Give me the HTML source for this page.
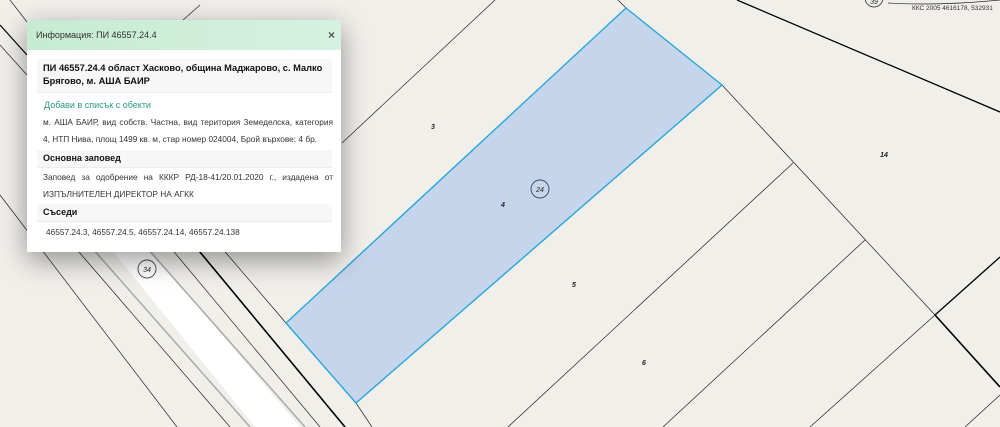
<!DOCTYPE html>
<html><head><meta charset="utf-8"><style>
body{margin:0;width:1000px;height:427px;overflow:hidden;background:#f1efea;font-family:"Liberation Sans","DejaVu Sans",sans-serif;position:relative}
svg{position:absolute;left:0;top:0}
.p{position:absolute;left:27px;top:20px;width:314px;height:232px;background:#fff;box-shadow:0 8px 26px rgba(0,0,0,.4)}
.h{height:30px;background:linear-gradient(90deg,#c6ebd1,#d6f1e2);font-size:9px;color:#333;line-height:31px;padding-left:9px;position:relative}
.x{position:absolute;right:6px;top:0;font-size:12px;font-weight:bold;color:#555}
.s{margin:0 9px 0 10px;background:#f7f7f7;border-bottom:1px solid #ececec;font-weight:bold;color:#111;padding:0 6px}
.t{font-size:8.3px;color:#333;padding:0 8px 0 16px;line-height:17px;text-align:justify}
</style></head><body>
<svg width="1000" height="427" viewBox="0 0 1000 427">
<polygon points="100,235 137,235 300,427 255,427" fill="#fff"/>
<g stroke="#222" fill="none" stroke-width="0.7">
<line x1="0" y1="195" x2="177" y2="427"/>
<line x1="60" y1="230" x2="230" y2="427"/>
<line x1="85" y1="240" x2="250" y2="427" stroke="#aaa" stroke-width="1.5"/>
<line x1="140" y1="240" x2="305" y2="427" stroke="#aaa" stroke-width="1.5"/>
<line x1="160" y1="235" x2="320" y2="427"/>
<line x1="190" y1="240" x2="345" y2="427" stroke="#000" stroke-width="1.6"/>
<line x1="215" y1="240" x2="286" y2="323"/>
<line x1="356" y1="403" x2="372" y2="427"/>
<line x1="342" y1="143" x2="495" y2="0"/>
<line x1="722" y1="85" x2="935" y2="315"/>
<line x1="935" y1="315" x2="1000" y2="387" stroke="#000" stroke-width="1.6"/>
<line x1="737" y1="0" x2="1000" y2="112" stroke="#000" stroke-width="1.3"/>
<line x1="935" y1="315" x2="1000" y2="257" stroke="#000" stroke-width="1.3"/>
<line x1="793" y1="163" x2="508" y2="427"/>
<line x1="865" y1="240" x2="663" y2="427"/>
<line x1="935" y1="315" x2="810" y2="427"/>
<line x1="1000" y1="395" x2="965" y2="427"/>
<line x1="0" y1="25" x2="27" y2="55" stroke="#000" stroke-width="1.2"/>
<line x1="0" y1="45" x2="27" y2="75"/>
<line x1="10" y1="0" x2="27" y2="22"/>
<line x1="183" y1="20" x2="200" y2="5"/>
<line x1="618" y1="0" x2="626" y2="8"/>
<path d="M888,3 Q940,6 1000,0"/>
</g>
<polygon points="626,8 722,85 356,403 286,323" fill="#c5d5ec" stroke="#2aa6da" stroke-width="1.4"/>
<g fill="none" stroke="#444" stroke-width="0.9"><circle cx="540" cy="189" r="9"/><circle cx="147" cy="269" r="9"/><circle cx="874" cy="-2" r="9"/></g>
<g font-size="7" fill="#222" font-style="italic" font-weight="bold" text-anchor="middle">
<text x="433" y="129">3</text><text x="503" y="207">4</text><text x="574" y="287">5</text><text x="644" y="365">6</text><text x="884" y="157">14</text>
<text x="540" y="192" font-weight="normal">24</text><text x="147" y="272" font-weight="normal">34</text><text x="874" y="4" font-weight="normal">39</text>
</g>
<text x="912" y="10" font-size="6.5" fill="#333">ККС 2005 4616178, 532931</text>
</svg>
<div class="p">
<div class="h">Информация: ПИ 46557.24.4<span class="x">×</span></div>
<div class="s" style="margin-top:9px;font-size:9.3px;line-height:13px;padding-top:3px;padding-bottom:4px">ПИ 46557.24.4 област Хасково, община Маджарово, с. Малко Брягово, м. АША БАИР</div>
<div style="font-size:9px;color:#2a9a82;padding:7px 0 0 17px;height:12px">Добави в списък с обекти</div>
<div class="t" style="padding-top:2px">м. АША БАИР, вид собств. Частна, вид територия Земеделска, категория 4, НТП Нива, площ 1499 кв. м, стар номер 024004, Брой върхове: 4 бр.</div>
<div class="s" style="font-size:9px;line-height:17px;margin-top:2px">Основна заповед</div>
<div class="t" style="padding-top:1px">Заповед за одобрение на КККР РД-18-41/20.01.2020 г., издадена от ИЗПЪЛНИТЕЛЕН ДИРЕКТОР НА АГКК</div>
<div class="s" style="font-size:9px;line-height:17px;margin-top:1px">Съседи</div>
<div class="t" style="padding-top:2px;padding-left:19px">46557.24.3, 46557.24.5, 46557.24.14, 46557.24.138</div>
</div>
</body></html>
